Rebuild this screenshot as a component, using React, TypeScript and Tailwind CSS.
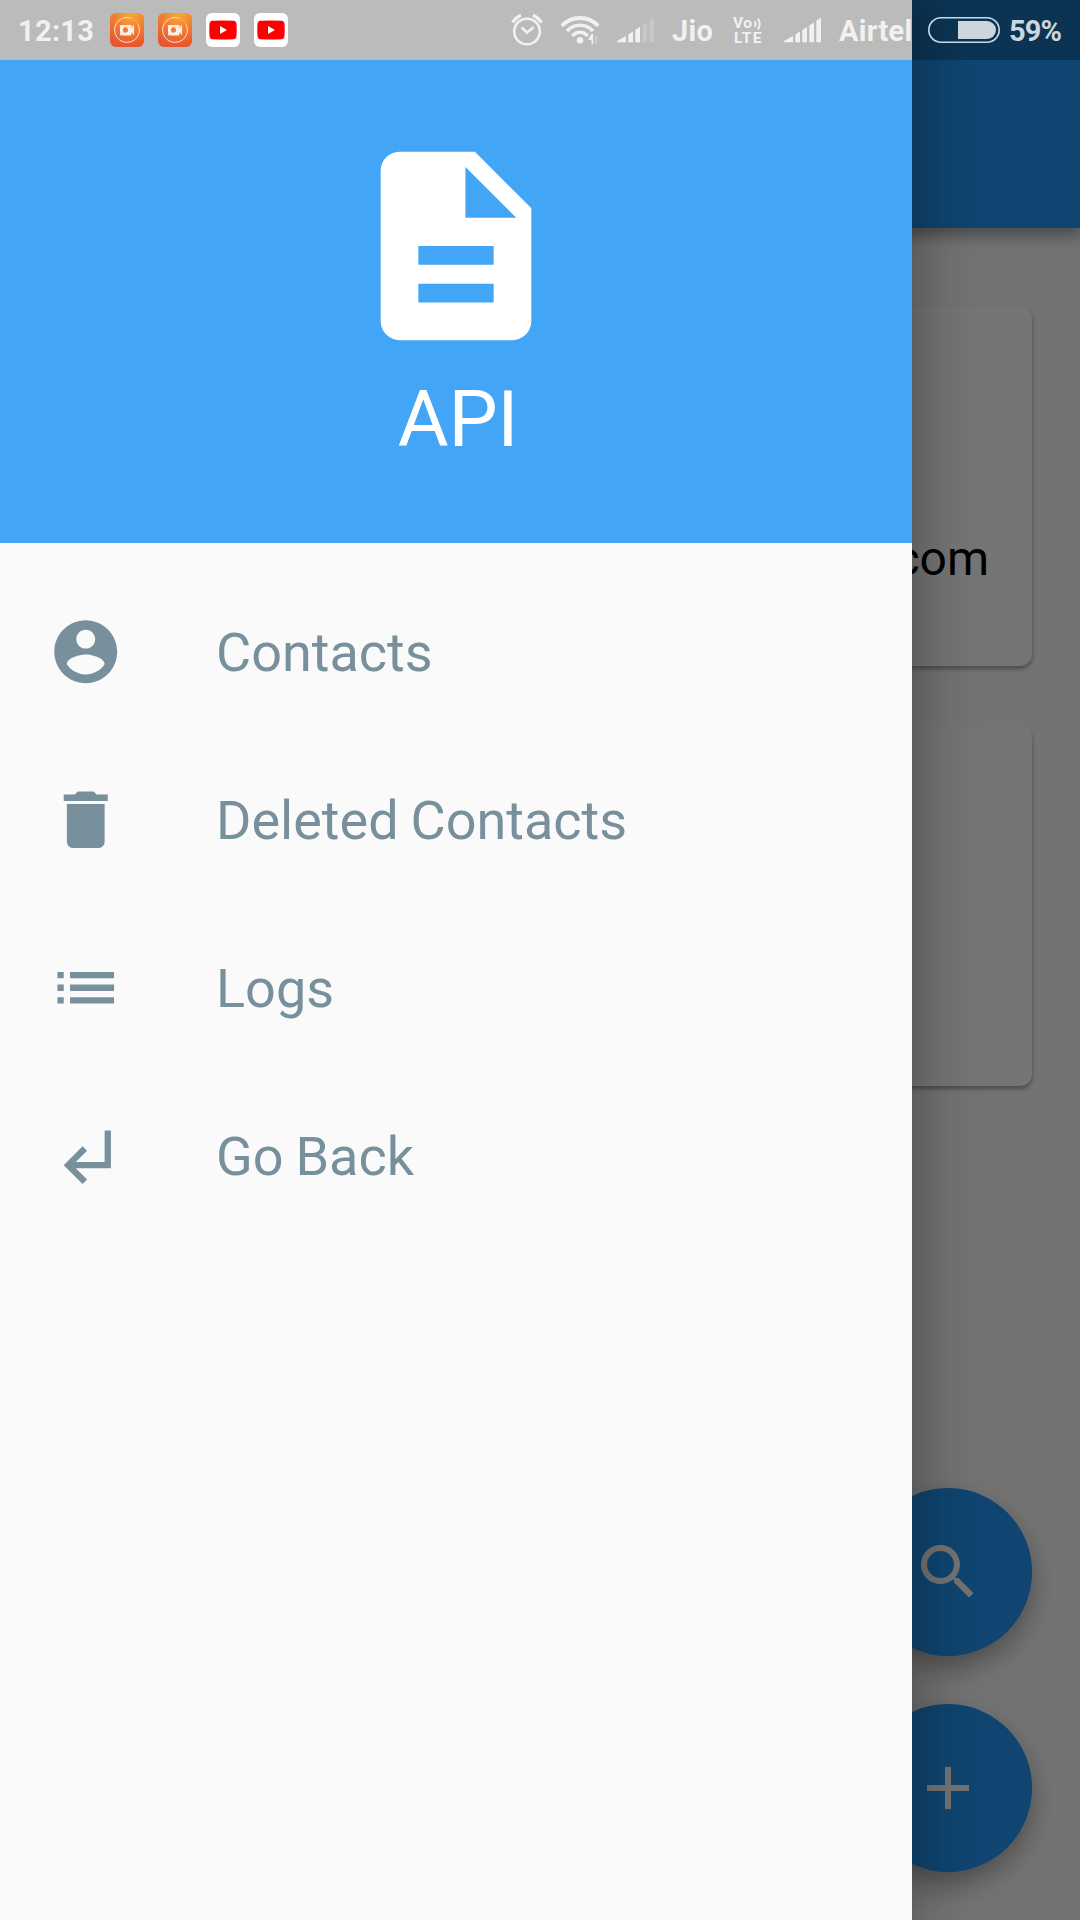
import React from "react";

const PATHS = {
  doc: "M14 2H6c-1.1 0-2 .9-2 2v16c0 1.1.9 2 2 2h12c1.1 0 2-.9 2-2V8l-6-6zm2 16H8v-2h8v2zm0-4H8v-2h8v2zm-3-5V3.6L18.4 9H13z",
  account:
    "M12 2C6.48 2 2 6.48 2 12s4.48 10 10 10 10-4.48 10-10S17.52 2 12 2zm0 3c1.66 0 3 1.34 3 3s-1.34 3-3 3-3-1.34-3-3 1.34-3 3-3zm0 14.2c-2.5 0-4.71-1.28-6-3.22.03-1.99 4-3.08 6-3.08 1.99 0 5.97 1.09 6 3.08-1.29 1.94-3.5 3.22-6 3.22z",
  trash: "M6 19c0 1.1.9 2 2 2h8c1.1 0 2-.9 2-2V7H6v12zM19 4h-3.5l-1-1h-5l-1 1H5v2h14V4z",
  list: "M3 13h2v-2H3v2zm0 4h2v-2H3v2zm0-8h2V7H3v2zm4 4h14v-2H7v2zm0 4h14v-2H7v2zM7 7v2h14V7H7z",
  back: "M11 9l1.42 1.42L8.83 14H18V4h2v12H8.83l3.59 3.58L11 21l-6-6 6-6z",
  search:
    "M15.5 14h-.79l-.28-.27C15.41 12.59 16 11.11 16 9.5 16 5.91 13.09 3 9.5 3S3 5.91 3 9.5 5.91 16 9.5 16c1.61 0 3.09-.59 4.23-1.57l.27.28v.79l5 4.99L20.49 19l-4.99-5zm-6 0C7.01 14 5 11.99 5 9.5S7.01 5 9.5 5 14 7.01 14 9.5 11.99 14 9.5 14z",
  plus: "M19 13h-6v6h-2v-6H5v-2h6V5h2v6h6v2z",
};

function Icon({ d, className }: { d: string; className: string }) {
  return (
    <svg viewBox="0 0 24 24" fill="currentColor" className={className}>
      <path d={d} />
    </svg>
  );
}

function RecorderIcon({ id }: { id: string }) {
  return (
    <svg viewBox="0 0 34 34" className="size-[34px] shrink-0">
      <defs>
        <radialGradient id={id} cx="0.6" cy="0" r="1">
          <stop offset="0" stopColor="#fbab2c" />
          <stop offset="0.5" stopColor="#f17e33" />
          <stop offset="1" stopColor="#e5552f" />
        </radialGradient>
      </defs>
      <rect width="34" height="34" rx="6" fill={`url(#${id})`} />
      <path d="M21 5.2A12.4 12.4 0 1 0 28.2 11.6" fill="none" stroke="#fbe3d3" strokeWidth="1" />
      <path d="M21 5.2A12.4 12.4 0 0 1 28.2 11.6" fill="none" stroke="#f9c08a" strokeWidth="0.6" />
      <path
        fillRule="evenodd"
        fill="#fbeee6"
        d="M11 12h9.500q1 0 1 1v2l2.500-3.500v11L21.500 19v2.500q0 1-1 1H11q-1 0-1-1V13q0-1 1-1zM15.500 14.300a2.700 2.700 0 1 0 .01 0z"
      />
    </svg>
  );
}

function YoutubeIcon() {
  return (
    <svg viewBox="0 0 34 34" className="size-[34px] shrink-0">
      <rect width="34" height="34" rx="6" fill="#fff" />
      <path
        d="M6.500 7.800Q17 7 27.500 7.800Q30.300 8 30.500 11Q31 17 30.500 23Q30.300 26 27.500 26.200Q17 27 6.500 26.200Q3.700 26 3.500 23Q3 17 3.500 11Q3.700 8 6.500 7.800z"
        fill="#fe0000"
      />
      <path d="M14 13v8l7-4z" fill="#fff" />
    </svg>
  );
}

function Signal({ faded, className }: { faded: boolean; className: string }) {
  const dim = faded ? 0.22 : 1;
  return (
    <svg viewBox="0 0 38 26" fill="currentColor" className={className}>
      <path d="M0 25.200V24L9 19v6.200z" />
      <path d="M11.300 25.200V17.500L16 14.500v10.700z" />
      <path d="M18.300 25.200V13L23 10v15.200z" />
      <path opacity={dim} d="M25.300 25.200V8.500L30 5.500v19.700z" />
      <path opacity={dim} d="M32.300 25.200V4L37 .5v24.700z" />
    </svg>
  );
}

function StatusBar() {
  return (
    <div className="relative z-30 col-start-1 row-start-1 flex h-[60px] w-full text-[29px] leading-[60px] font-bold text-[#f1f1f1]">
      <div className="flex w-[912px] shrink-0 items-center overflow-hidden whitespace-nowrap bg-[#bbbbbb]">
        <span className="ml-[18px] w-[92px] shrink-0 pt-[1px] tracking-[0.3px]">12:13</span>
        <div className="flex shrink-0 gap-[14px]">
          <RecorderIcon id="rec-a" />
          <RecorderIcon id="rec-b" />
          <YoutubeIcon />
          <YoutubeIcon />
        </div>
        <svg viewBox="0 0 32 34" fill="none" stroke="currentColor" className="ml-[223px] h-[34px] w-[32px] shrink-0">
          <circle cx="16" cy="18.500" r="12.800" strokeWidth="2.600" />
          <path d="M10.500 14.500l5.500 5 6.500-5.200" strokeWidth="2.800" />
          <path d="M1.500 9.500Q4.500 4.500 10 2.200M30.500 9.500Q27.500 4.500 22 2.200" strokeWidth="3.200" />
        </svg>
        <svg viewBox="0 0 40 30" fill="none" stroke="currentColor" className="ml-[17px] h-[30px] w-[40px] shrink-0">
          <path d="M1.800 10.800Q9.500 3 20 3T38.200 10.800" strokeWidth="3.800" />
          <path d="M7 16Q12.500 10.300 20 10.300T33 16" strokeWidth="3.600" />
          <path d="M12.300 21Q15.500 17.300 20 17.300T27.700 21" strokeWidth="3.400" />
          <circle cx="20" cy="25.300" r="3.300" fill="currentColor" stroke="none" />
          <path d="M31.500 19h1.700v10h-1.700v-4H28z" fill="currentColor" stroke="none" />
          <path d="M35 29V19l4.500 5h-2.500v5z" fill="currentColor" stroke="none" opacity="0.3" />
        </svg>
        <Signal faded className="ml-[17px] h-[26px] w-[38px] shrink-0" />
        <span className="ml-[17px] w-[61px] shrink-0 pt-[1px] tracking-[0.3px]">Jio</span>
        <div className="mt-[2px] flex w-[32px] shrink-0 flex-col text-[15.5px] leading-[15px]">
          <span className="flex h-[15px] items-center tracking-[0.5px]">
            Vo
            <svg viewBox="0 0 9 14" fill="none" stroke="currentColor" strokeWidth="1.800" className="h-[14px] w-[9px] shrink-0">
              <path d="M1.500 4Q3.800 7 1.500 10M4.700 1.500Q9 7 4.700 12.500" />
            </svg>
          </span>
          <span className="h-[15px] pl-px tracking-[1.2px]">LTE</span>
        </div>
        <Signal faded={false} className="ml-[19px] h-[26px] w-[38px] shrink-0" />
        <span className="ml-[17px] pt-[1px] tracking-[0.3px]">Airtel</span>
      </div>
      <div className="flex flex-1 items-center text-[#cdd6dd]">
        <svg viewBox="0 0 72 26" className="ml-[16px] h-[26px] w-[72px] shrink-0">
          <rect x="0.800" y="0.800" width="70.400" height="24.400" rx="12.200" fill="none" stroke="#c6dcea" strokeWidth="1.600" />
          <path d="M30 4h29a9 9 0 0 1 0 18H30z" fill="#cdd6dd" />
        </svg>
        <span className="ml-[9px] pt-[1px] tracking-[-0.9px]">59%</span>
      </div>
    </div>
  );
}

function Page() {
  return (
    <div className="col-start-1 row-start-1 flex h-[1920px] w-[1080px] flex-col bg-[#737373]">
      <div className="z-10 h-[228px] shrink-0 bg-[#0f4570] shadow-[0_6px_14px_2px_rgba(0,0,0,0.35)]">
        <div className="h-[60px] bg-[#0b3454]" />
      </div>
      <div className="mt-[78px] flex flex-col gap-[60px] px-[48px]">
        <div className="flex h-[360px] items-start justify-end rounded-[12px] bg-[#757575] pt-[223px] pr-[43px] shadow-[0_3px_4px_rgba(0,0,0,0.35)]">
          <span className="text-[48px] leading-[60px] text-black">com</span>
        </div>
        <div className="h-[360px] rounded-[12px] bg-[#757575] shadow-[0_3px_4px_rgba(0,0,0,0.35)]" />
      </div>
      <div className="mt-auto flex flex-col items-end gap-[48px] pr-[48px] pb-[48px] text-[#737373]">
        {[PATHS.search, PATHS.plus].map((d) => (
          <button
            key={d}
            className="flex size-[168px] items-center justify-center rounded-full bg-[#0f4570] shadow-[0_12px_26px_rgba(0,0,0,0.32)]"
          >
            <Icon d={d} className="size-[72px]" />
          </button>
        ))}
      </div>
    </div>
  );
}

const ITEMS = [
  { label: "Contacts", d: PATHS.account },
  { label: "Deleted Contacts", d: PATHS.trash },
  { label: "Logs", d: PATHS.list },
  { label: "Go Back", d: PATHS.back },
];

function Drawer() {
  return (
    <div className="z-20 col-start-1 row-start-1 flex h-[1920px] w-[912px] flex-col bg-[#fafafa] shadow-[0_0_56px_6px_rgba(0,0,0,0.32)]">
      <header className="flex h-[543px] flex-col items-center bg-[#42a5f5] pt-[133px] text-white">
        <Icon d={PATHS.doc} className="size-[226px]" />
        <h1 className="mt-[15px] ml-[4px] text-[78px] leading-[92px] tracking-[-0.3px]">API</h1>
      </header>
      <nav className="mt-[25px] flex flex-col text-[#78909c]">
        {ITEMS.map((item) => (
          <a key={item.label} className="flex h-[168px] items-center pl-[48px]">
            <Icon d={item.d} className="size-[75.500px] shrink-0" />
            <span className="ml-[92.5px] pt-[2px] text-[54px] leading-[64px] [word-spacing:-1.5px]">{item.label}</span>
          </a>
        ))}
      </nav>
    </div>
  );
}

export default function App() {
  return (
    <div className="grid h-[1920px] w-[1080px] overflow-hidden font-['Roboto',sans-serif]">
      <Page />
      <Drawer />
      <StatusBar />
    </div>
  );
}
